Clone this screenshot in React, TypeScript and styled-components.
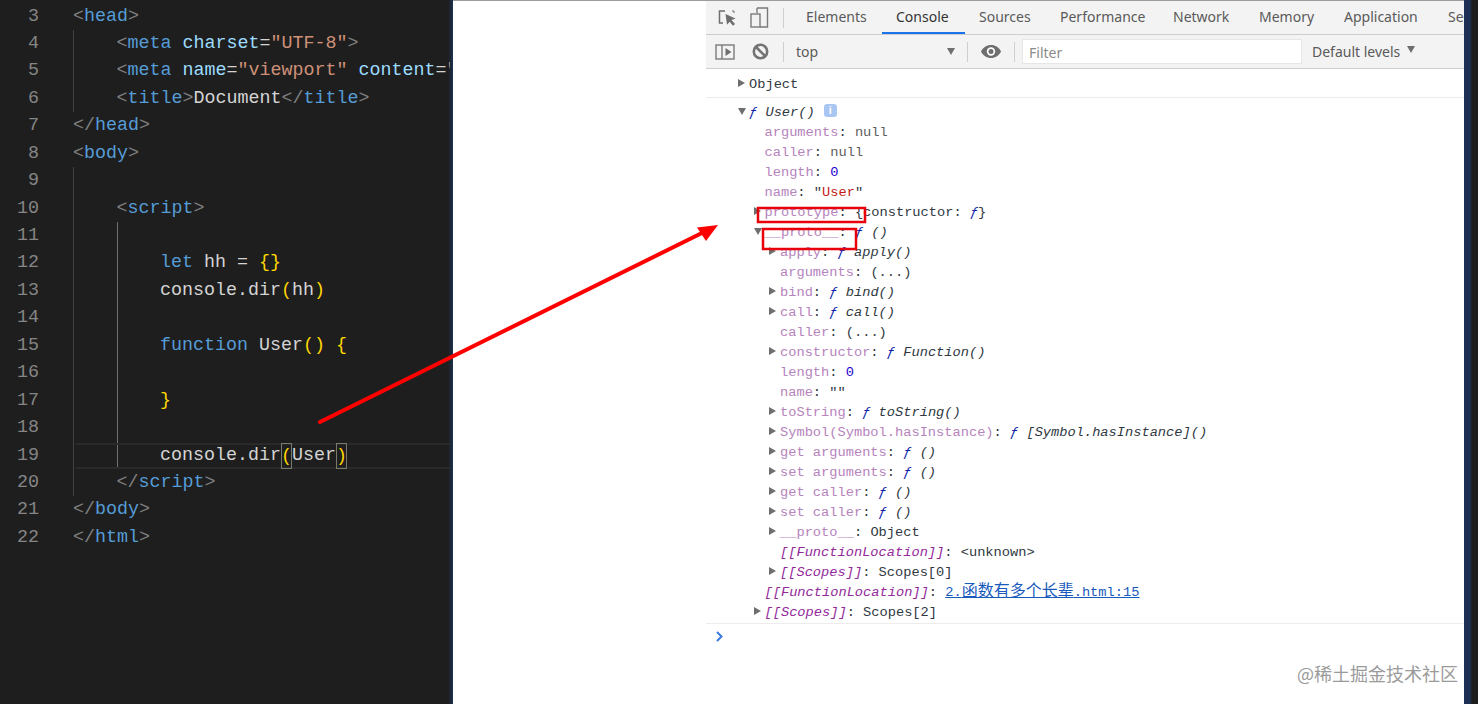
import React from "react";
import styled, { createGlobalStyle } from "styled-components";

const Global = createGlobalStyle`
  html, body { margin: 0; padding: 0; background: #fff; }
  body { width: 1478px; height: 704px; overflow: hidden; }
`;

const Page = styled.div`
  position: relative;
  display: flex;
  width: 1478px;
  height: 704px;
  overflow: hidden;
`;

const Editor = styled.section`
  width: 453px;
  flex: none;
  padding-top: 2.5px;
  box-sizing: border-box;
  overflow: hidden;
  background: linear-gradient(90deg, #1e1e1e 448px, #1c2c42 452px, #1c3a5e 453px);
  font-family: "Liberation Mono", "DejaVu Sans Mono", monospace;
  font-size: 18.33px;
  color: #d4d4d4;
`;

const Line = styled.div<{ $active?: boolean }>`
  position: relative;
  display: flex;
  width: 450px;
  overflow: hidden;
  height: 27.45px;
  line-height: 27.45px;
  white-space: pre;
  ${(p) =>
    p.$active &&
    `&::after {
      content: "";
      position: absolute;
      left: 76px;
      right: 0;
      top: 1px;
      bottom: 0;
      border-top: 2px solid #2a2a2a;
      border-bottom: 2px solid #2a2a2a;
    }`}
`;

const LineNo = styled.span`
  flex: none;
  width: 39px;
  margin-right: 34px;
  text-align: right;
  color: #858585;
`;

const Guide = styled.span<{ $bright?: boolean }>`
  flex: none;
  width: 43.5px;
  box-sizing: border-box;
  border-left: 1px solid ${(p) => (p.$bright ? "#707070" : "#404040")};
`;

const CodeText = styled.span`
  flex: none;
`;

const Angle = styled.span`color: #808080;`;
const TagName = styled.span`color: #569cd6;`;
const AttrName = styled.span`color: #9cdcfe;`;
const Str = styled.span`color: #ce9178;`;
const Brace = styled.span`color: #ffd700;`;
const Plain = styled.span`color: #d4d4d4;`;
const Match = styled.span`
  position: relative;
  z-index: 1;
  color: #ffd700;
  box-shadow: inset 0 0 0 1px #7a7a6c;
  display: inline-block;
  height: 26px;
  line-height: 27px;
  vertical-align: top;
  margin-top: 1px;
`;

const Blank = styled.div`
  width: 253px;
  flex: none;
  background: #fff;
  border-top: 1px solid #9c9c9c;
`;

const Strip = styled.div`
  flex: 1;
  background: linear-gradient(90deg, #1b3054 6px, #1e1e1e 8px);
`;

const DevTools = styled.section`
  width: 758px;
  flex: none;
  display: flex;
  flex-direction: column;
  box-sizing: border-box;
  border-top: 1px solid #9c9c9c;
  background: #fff;
  overflow: hidden;
`;

const TabBar = styled.div`
  height: 33px;
  display: flex;
  align-items: center;
  flex: none;
  background: #f3f3f3;
  border-bottom: 1px solid #cdcdcd;
  white-space: nowrap;
  overflow: hidden;
  font-family: "Noto Sans", sans-serif;
  font-size: 14px;
`;

const BarIcon = styled.svg<{ $ml: number; $mr: number }>`
  flex: none;
  margin-left: ${(p) => p.$ml}px;
  margin-right: ${(p) => p.$mr}px;
`;

const Sep = styled.span<{ $ml: number; $mr: number }>`
  flex: none;
  width: 1px;
  height: 20px;
  background: #cfcfcf;
  margin-left: ${(p) => p.$ml}px;
  margin-right: ${(p) => p.$mr}px;
`;

const Tab = styled.span<{ $on?: boolean; $width: number }>`
  flex: none;
  width: ${(p) => p.$width}px;
  height: 33px;
  line-height: 31px;
  box-sizing: border-box;
  padding-left: 14px;
  color: ${(p) => (p.$on ? "#333" : "#5a5a5a")};
  ${(p) => p.$on && "border-bottom: 2px solid #1a73e8;"}
`;

const FilterBar = styled.div`
  height: 33px;
  display: flex;
  align-items: center;
  flex: none;
  background: #f3f3f3;
  border-bottom: 1px solid #cdcdcd;
  font-family: "Noto Sans", sans-serif;
  font-size: 14px;
  color: #5a5a5a;
`;

const ContextName = styled.span`
  width: 151px;
  flex: none;
`;

const Caret = styled.span`
  flex: none;
  width: 0;
  height: 0;
  border-left: 4.5px solid transparent;
  border-right: 4.5px solid transparent;
  border-top: 7px solid #6e6e6e;
`;

const FilterInput = styled.div`
  flex: none;
  width: 280px;
  height: 25px;
  line-height: 25px;
  box-sizing: border-box;
  padding-left: 6px;
  background: #fff;
  border: 1px solid #e6e6e6;
  color: #8a8a8a;
`;

const Levels = styled.span`
  flex: none;
  margin-left: 10px;
  margin-right: 7px;
`;

const LevelCaret = styled(Caret)`
  margin-top: -4px;
`;

const Log = styled.div`
  flex: none;
  font-family: "Liberation Mono", monospace;
  font-size: 13.7px;
  color: #303942;
`;

const FirstMessage = styled.div`
  padding: 6px 0 2px;
  height: 20px;
  border-bottom: 1px solid #ececec;
`;

const SecondMessage = styled.div`
  padding: 5px 0 0;
  border-bottom: 1px solid #ececec;
`;

const Row = styled.div<{ $depth: number }>`
  height: 20px;
  line-height: 20px;
  white-space: pre;
  padding-left: ${(p) => 43 + p.$depth * 15.5}px;
`;

const Arrow = styled.span<{ $open?: boolean }>`
  display: inline-block;
  width: 0;
  height: 0;
  vertical-align: 1px;
  ${(p) =>
    p.$open
      ? `border-left: 4px solid transparent; border-right: 4px solid transparent; border-top: 7px solid #6e6e6e; margin-left: -11px; margin-right: 3px;`
      : `border-top: 4.5px solid transparent; border-bottom: 4.5px solid transparent; border-left: 7px solid #6e6e6e; margin-left: -11px; margin-right: 4px;`}
`;

const Key = styled.span`color: #b683bd;`;
const InternalKey = styled.span`color: #93299b; font-style: italic;`;
const Nul = styled.span`color: #5e5e5e;`;
const Num = styled.span`color: #1c00cf;`;
const Quote = styled.span`color: #303942;`;
const StrVal = styled.span`color: #c41a16;`;
const FnMark = styled.span`color: #0d22aa; font-style: italic;`;
const FnName = styled.span`font-style: italic;`;
const Link = styled.span`color: #185abc; text-decoration: underline;`;
const Han = styled.span`
  font-family: "Noto Sans CJK SC", sans-serif;
  font-size: 16px;
  line-height: 0;
`;

const InfoBadge = styled.span`
  display: inline-block;
  width: 13px;
  height: 13px;
  margin-left: 9px;
  border-radius: 3px;
  background: #a9c6f3;
  color: #fff;
  font-family: "Liberation Sans", sans-serif;
  font-weight: 700;
  font-style: normal;
  font-size: 11px;
  line-height: 13px;
  text-align: center;
  vertical-align: 2px;
`;

const Prompt = styled.div`
  padding: 7px 0 0 9px;
  height: 16px;
`;

const Overlay = styled.svg`
  position: absolute;
  left: 0;
  top: 0;
  pointer-events: none;
`;

const Watermark = styled.span`
  position: absolute;
  left: 1297px;
  top: 661px;
  font-family: "Noto Sans CJK SC", "Noto Sans", sans-serif;
  font-size: 18px;
  line-height: 24px;
  color: #9b9b9b;
  white-space: nowrap;
`;

type CodeLine = { guides: number; text?: React.ReactNode };

const code: CodeLine[] = [
  { guides: 0, text: <><Angle>&lt;</Angle><TagName>head</TagName><Angle>&gt;</Angle></> },
  { guides: 1, text: <><Angle>&lt;</Angle><TagName>meta</TagName> <AttrName>charset</AttrName><Plain>=</Plain><Str>"UTF-8"</Str><Angle>&gt;</Angle></> },
  { guides: 1, text: <><Angle>&lt;</Angle><TagName>meta</TagName> <AttrName>name</AttrName><Plain>=</Plain><Str>"viewport"</Str> <AttrName>content</AttrName><Plain>=</Plain><Str>"width=device-width</Str></> },
  { guides: 1, text: <><Angle>&lt;</Angle><TagName>title</TagName><Angle>&gt;</Angle><Plain>Document</Plain><Angle>&lt;/</Angle><TagName>title</TagName><Angle>&gt;</Angle></> },
  { guides: 0, text: <><Angle>&lt;/</Angle><TagName>head</TagName><Angle>&gt;</Angle></> },
  { guides: 0, text: <><Angle>&lt;</Angle><TagName>body</TagName><Angle>&gt;</Angle></> },
  { guides: 1 },
  { guides: 1, text: <><Angle>&lt;</Angle><TagName>script</TagName><Angle>&gt;</Angle></> },
  { guides: 2 },
  { guides: 2, text: <><TagName>let</TagName> <Plain>hh</Plain> <Plain>=</Plain> <Brace>{"{}"}</Brace></> },
  { guides: 2, text: <><Plain>console.dir</Plain><Brace>(</Brace><Plain>hh</Plain><Brace>)</Brace></> },
  { guides: 2 },
  { guides: 2, text: <><TagName>function</TagName> <Plain>User</Plain><Brace>()</Brace> <Brace>{"{"}</Brace></> },
  { guides: 2 },
  { guides: 2, text: <Brace>{"}"}</Brace> },
  { guides: 2 },
  { guides: 2, text: <><Plain>console.dir</Plain><Match>(</Match><Plain>User</Plain><Match>)</Match></> },
  { guides: 1, text: <><Angle>&lt;/</Angle><TagName>script</TagName><Angle>&gt;</Angle></> },
  { guides: 0, text: <><Angle>&lt;/</Angle><TagName>body</TagName><Angle>&gt;</Angle></> },
  { guides: 0, text: <><Angle>&lt;/</Angle><TagName>html</TagName><Angle>&gt;</Angle></> },
];

const F = ({ name }: { name: string }) => (
  <><FnMark>ƒ</FnMark> <FnName>{name}</FnName></>
);

const KV = ({ k, children }: { k: string; children: React.ReactNode }) => (
  <><Key>{k}</Key>: {children}</>
);

export default function App() {
  return (
    <Page>
      <Global />
      <Editor>
        {code.map((c, i) => (
          <Line key={i} $active={i + 3 === 19}>
            <LineNo>{i + 3}</LineNo>
            {c.guides > 0 && <Guide />}
            {c.guides > 1 && <Guide $bright />}
            {c.text && <CodeText>{c.text}</CodeText>}
          </Line>
        ))}
      </Editor>
      <Blank />
      <DevTools>
        <TabBar>
          <BarIcon $ml={12} $mr={13} width="19" height="20" viewBox="0 0 19 20" fill="none">
            <path d="M7 3H1.500v12H5" stroke="#6e6e6e" strokeWidth="1.500" />
            <path d="M14 3h2v2" stroke="#6e6e6e" strokeWidth="1" />
            <path d="M7.500 6l10 4.500-4 1.500 3.500 4-2 1.800-3.300-4.100-2.700 3z" fill="#6e6e6e" />
          </BarIcon>
          <BarIcon $ml={0} $mr={14} width="19" height="21" viewBox="0 0 19 21" fill="none">
            <path d="M7 1h10.500v19H10" stroke="#7a7a7a" strokeWidth="1.400" />
            <path d="M7 1v5" stroke="#7a7a7a" strokeWidth="1.400" />
            <rect x="1" y="7" width="9" height="13" stroke="#7a7a7a" strokeWidth="1.400" />
          </BarIcon>
          <Sep $ml={0} $mr={8} />
          <Tab $width={90}>Elements</Tab>
          <Tab $on $width={83}>Console</Tab>
          <Tab $width={81}>Sources</Tab>
          <Tab $width={113}>Performance</Tab>
          <Tab $width={86}>Network</Tab>
          <Tab $width={85}>Memory</Tab>
          <Tab $width={104}>Application</Tab>
          <Tab $width={90}>Security</Tab>
        </TabBar>
        <FilterBar>
          <BarIcon $ml={9} $mr={17} width="20" height="16" viewBox="0 0 20 16" fill="none">
            <rect x="1" y="1" width="18" height="14" stroke="#7a7a7a" strokeWidth="1.400" />
            <path d="M7 1v14" stroke="#7a7a7a" strokeWidth="1.400" />
            <path d="M10.500 4l6 4-6 4z" fill="#6e6e6e" />
          </BarIcon>
          <BarIcon $ml={0} $mr={14} width="17" height="17" viewBox="0 0 17 17" fill="none">
            <circle cx="8.500" cy="8.500" r="6.700" stroke="#737373" strokeWidth="2.600" />
            <path d="M4 4l9 9" stroke="#737373" strokeWidth="2.600" />
          </BarIcon>
          <Sep $ml={0} $mr={12} />
          <ContextName>top</ContextName>
          <Caret />
          <Sep $ml={12} $mr={13} />
          <BarIcon $ml={0} $mr={13} width="20" height="13" viewBox="0 0 20 13">
            <path d="M10 0C5.500 0 2 2.600 0 6.500 2 10.400 5.500 13 10 13s8-2.600 10-6.500C18 2.600 14.500 0 10 0z" fill="#6e6e6e" />
            <circle cx="10" cy="6.500" r="4.200" fill="#fff" />
            <circle cx="10" cy="6.500" r="2.500" fill="#6e6e6e" />
          </BarIcon>
          <Sep $ml={0} $mr={7} />
          <FilterInput>Filter</FilterInput>
          <Levels>Default levels</Levels>
          <LevelCaret />
        </FilterBar>
        <Log>
          <FirstMessage>
            <Row $depth={0}><Arrow />Object</Row>
          </FirstMessage>
          <SecondMessage>
            <Row $depth={0}><Arrow $open /><F name="User()" /><InfoBadge>i</InfoBadge></Row>
            <Row $depth={1}><KV k="arguments"><Nul>null</Nul></KV></Row>
            <Row $depth={1}><KV k="caller"><Nul>null</Nul></KV></Row>
            <Row $depth={1}><KV k="length"><Num>0</Num></KV></Row>
            <Row $depth={1}><KV k="name"><Quote>"</Quote><StrVal>User</StrVal><Quote>"</Quote></KV></Row>
            <Row $depth={1}><Arrow /><KV k="prototype">{"{constructor: "}<FnMark>ƒ</FnMark>{"}"}</KV></Row>
            <Row $depth={1}><Arrow $open /><KV k="__proto__"><F name="()" /></KV></Row>
            <Row $depth={2}><Arrow /><KV k="apply"><F name="apply()" /></KV></Row>
            <Row $depth={2}><KV k="arguments">(...)</KV></Row>
            <Row $depth={2}><Arrow /><KV k="bind"><F name="bind()" /></KV></Row>
            <Row $depth={2}><Arrow /><KV k="call"><F name="call()" /></KV></Row>
            <Row $depth={2}><KV k="caller">(...)</KV></Row>
            <Row $depth={2}><Arrow /><KV k="constructor"><F name="Function()" /></KV></Row>
            <Row $depth={2}><KV k="length"><Num>0</Num></KV></Row>
            <Row $depth={2}><KV k="name"><Quote>""</Quote></KV></Row>
            <Row $depth={2}><Arrow /><KV k="toString"><F name="toString()" /></KV></Row>
            <Row $depth={2}><Arrow /><KV k="Symbol(Symbol.hasInstance)"><F name="[Symbol.hasInstance]()" /></KV></Row>
            <Row $depth={2}><Arrow /><KV k="get arguments"><F name="()" /></KV></Row>
            <Row $depth={2}><Arrow /><KV k="set arguments"><F name="()" /></KV></Row>
            <Row $depth={2}><Arrow /><KV k="get caller"><F name="()" /></KV></Row>
            <Row $depth={2}><Arrow /><KV k="set caller"><F name="()" /></KV></Row>
            <Row $depth={2}><Arrow /><KV k="__proto__">Object</KV></Row>
            <Row $depth={2}><InternalKey>[[FunctionLocation]]</InternalKey>: &lt;unknown&gt;</Row>
            <Row $depth={2}><Arrow /><InternalKey>[[Scopes]]</InternalKey>: Scopes[0]</Row>
            <Row $depth={1}><InternalKey>[[FunctionLocation]]</InternalKey>: <Link>2.<Han>函数有多个长辈</Han>.html:15</Link></Row>
            <Row $depth={1}><Arrow /><InternalKey>[[Scopes]]</InternalKey>: Scopes[2]</Row>
          </SecondMessage>
          <Prompt>
            <svg width="9" height="11" viewBox="0 0 9 11" fill="none">
              <path d="M2 1l4.500 4.500L2 10" stroke="#3b78e0" strokeWidth="2" />
            </svg>
          </Prompt>
        </Log>
      </DevTools>
      <Strip />
      <Overlay width="1478" height="704" viewBox="0 0 1478 704" fill="none">
        <path d="M320 422L706 231" stroke="#f00" strokeWidth="4" strokeLinecap="round" />
        <path d="M718 225L697 227.500L706 241z" fill="#f00" />
        <rect x="758" y="208" width="107" height="14" stroke="#e8000b" strokeWidth="2.500" />
        <rect x="763" y="229" width="93" height="20" stroke="#e8000b" strokeWidth="2.500" />
      </Overlay>
      <Watermark>@稀土掘金技术社区</Watermark>
    </Page>
  );
}
